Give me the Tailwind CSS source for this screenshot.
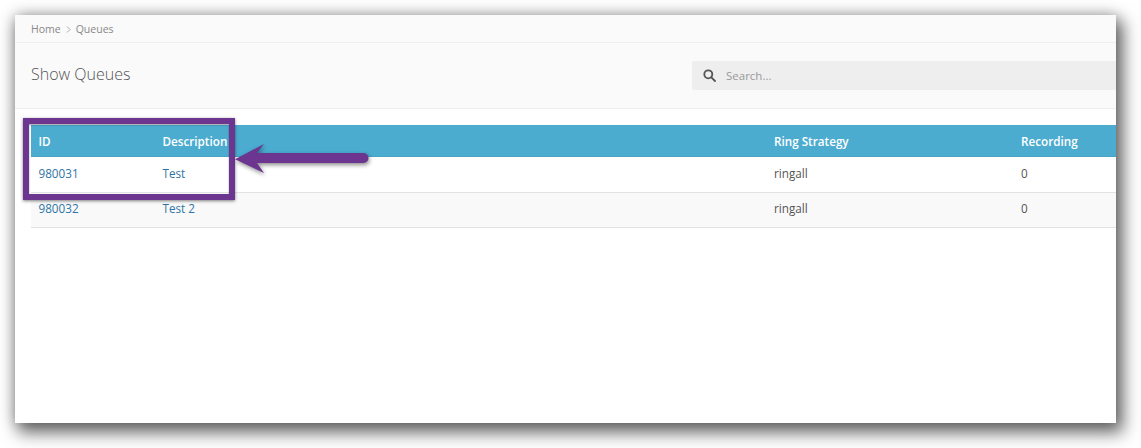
<!DOCTYPE html>
<html lang="en">
<head>
    <meta charset="UTF-8">
    <title>Show Queues</title>
    <script src="https://cdn.jsdelivr.net/npm/@tailwindcss/browser@4"></script>
</head>
<body class="bg-white h-[448px] w-[1141px] overflow-hidden font-['Open_Sans',sans-serif] text-[11.7px] text-[#555]">
    <div class="p-[15px] pr-[25px]">
        <div class="relative h-[408px] bg-white shadow-[0_0_14px_rgba(0,0,0,0.28),5px_8px_16px_2px_rgba(0,0,0,0.55)]">
            <div class="overflow-hidden h-full">
                <!-- breadcrumb -->
                <div class="flex items-center gap-[5px] h-[28px] pl-4 pt-[2px] bg-[#fafafa] border-b border-[#eeeeee] text-[10.5px] text-[#888]">
                    <span>Home</span>
                    <svg class="w-[5px] h-[7px]" viewBox="0 0 5 7" fill="none" stroke="#aaa" stroke-width="1"><path d="M1 0.5l3 3-3 3"/></svg>
                    <span>Queues</span>
                </div>

                <!-- page title -->
                <div class="flex items-center justify-between h-[66px] pl-4 pb-[3px] bg-[#fafafa] border-b border-[#eeeeee]">
                    <h1 class="text-[16px] font-light text-[#555]">Show Queues</h1>
                    <div class="flex items-center w-[424px] h-[29px] bg-[#eeeeee] rounded-l-[2px] pl-[11px] gap-[10px] mt-[3px]">
                        <svg class="w-[13px] h-[13px]" viewBox="0 0 13 13" fill="none" stroke="#555" stroke-width="1.8"><circle cx="5.3" cy="5.3" r="4"/><path d="M8.3 8.3l3.7 3.7" stroke-linecap="round"/></svg>
                        <span class="text-[11.5px] text-[#999]">Search...</span>
                    </div>
                </div>

                <!-- queues table -->
                <div class="pt-4 pl-4">
                    <div class="grid grid-cols-[124px_611px_247px_1fr] items-center h-[32px] pt-[2px] bg-[#4bacd0] border-b border-[#45a3c6] text-white font-semibold">
                        <div class="pl-[7.5px]">ID</div>
                        <div class="pl-[7.5px]">Description</div>
                        <div class="pl-2">Ring Strategy</div>
                        <div class="pl-2">Recording</div>
                    </div>
                    <div class="grid grid-cols-[124px_611px_247px_1fr] items-center h-[36px] pb-[1px] border-b border-[#e2e2e2]">
                        <div class="pl-[7.5px] text-[#2f74a5]">980031</div>
                        <div class="pl-[7.5px] text-[#2f74a5]">Test</div>
                        <div class="pl-2">ringall</div>
                        <div class="pl-2">0</div>
                    </div>
                    <div class="grid grid-cols-[124px_611px_247px_1fr] items-center h-[35px] pb-[2px] bg-[#f9f9f9] border-b border-[#e2e2e2]">
                        <div class="pl-[7.5px] text-[#2f74a5]">980032</div>
                        <div class="pl-[7.5px] text-[#2f74a5]">Test 2</div>
                        <div class="pl-2">ringall</div>
                        <div class="pl-2">0</div>
                    </div>
                </div>
            </div>

            <!-- annotation: box and arrow -->
            <div class="absolute left-[8px] top-[103px] w-[212px] h-[82px] border-[6px] border-[#6b3590] shadow-[0_1px_3px_rgba(0,0,0,0.5),inset_0_1px_2px_rgba(0,0,0,0.4)]"></div>
            <svg class="absolute left-[218px] top-[125px] drop-shadow-[1px_2px_2px_rgba(0,0,0,0.45)]" width="140" height="40" viewBox="0 0 140 40" fill="#6b3590">
                <path d="M2 19.300L31 4L24 13H130.500a5 5 0 0 1 0 10H24L31 33Z"/>
            </svg>
        </div>
    </div>
</body>
</html>
